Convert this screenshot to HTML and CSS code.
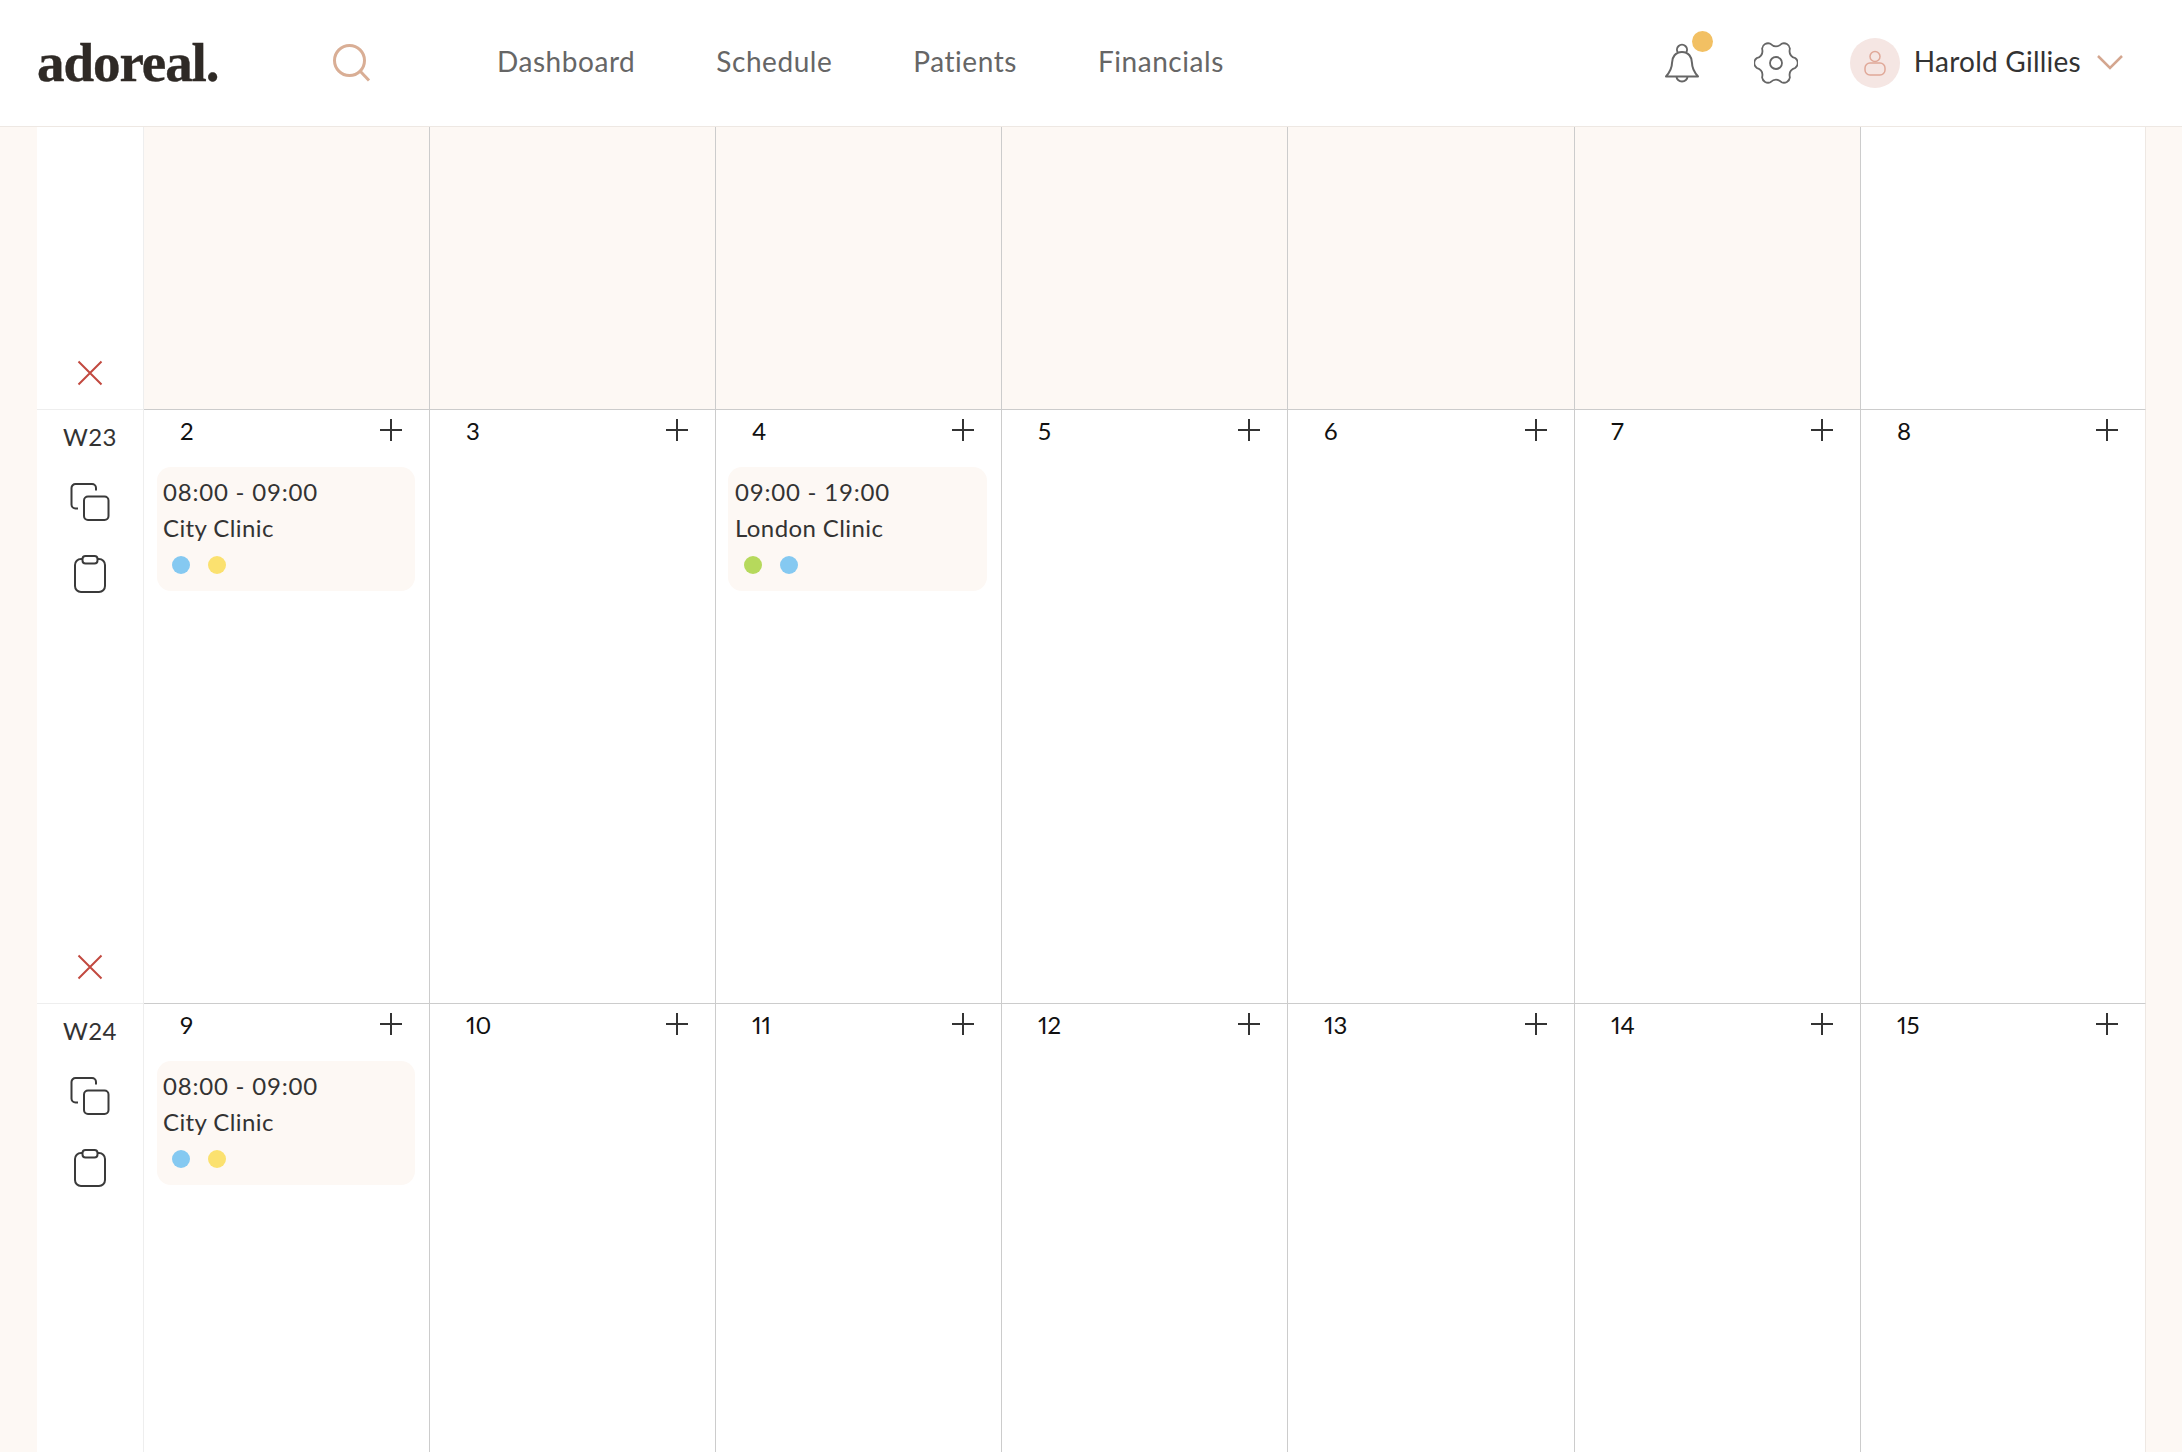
FILE: index.html
```html
<!DOCTYPE html>
<html lang="en">
<head>
<meta charset="utf-8">
<title>adoreal. Schedule</title>
<link rel="stylesheet" href="styles.css">
</head>
<body>
<svg class="defs" width="0" height="0" aria-hidden="true">
  <symbol id="i-x" viewBox="0 0 26 26"><path d="M1.500 1.500l23 23M24.500 1.500l-23 23"/></symbol>
  <symbol id="i-plus" viewBox="0 0 24 24"><path d="M12 1v22M1 12h22"/></symbol>
  <symbol id="i-copy" viewBox="0 0 40 38"><rect x="14" y="13.500" width="24.500" height="23.500" rx="4"/><path d="M8 25.500h-2.500a4 4 0 0 1-4-4V5a4 4 0 0 1 4-4H22a4 4 0 0 1 4 4v2.500"/></symbol>
  <symbol id="i-clip" viewBox="0 0 32 38"><rect x="1" y="4" width="30" height="33" rx="6"/><rect x="8.500" y="1" width="15" height="7.500" rx="3" class="fill-white"/></symbol>
</svg>

<header class="topbar">
  <div class="logo">adoreal.</div>
  <svg class="search" width="38" height="38" viewBox="0 0 38 38"><circle cx="16.500" cy="16.500" r="15"/><path d="M27.500 27.500l8.500 9"/></svg>
  <nav class="nav">
    <a>Dashboard</a>
    <a>Schedule</a>
    <a>Patients</a>
    <a>Financials</a>
  </nav>
  <div class="tools">
    <div class="bell-wrap">
      <svg class="bell" width="36" height="42" viewBox="0 0 36 42"><path d="M14 10.800a5 5 0 1 1 8 0"/><path d="M18 10C11.500 10 8 15 8 21 8 27 5 31 2 34.500H34C31 31 28 27 28 21 28 15 24.500 10 18 10Z"/><path d="M12.500 34.500a5.500 5 0 0 0 11 0"/></svg>
      <span class="badge"></span>
    </div>
    <svg class="gear" width="44" height="44" viewBox="-22 -22 44 44"><path d="M19.400-4.800A6 6 0 0 1 19.400 4.800Q12.100 7 13.900 14.400A6 6 0 0 1 5.500 19.200Q0 14-5.500 19.200A6 6 0 0 1-13.900 14.400Q-12.100 7-19.400 4.800A6 6 0 0 1-19.400-4.800Q-12.100-7-13.900-14.400A6 6 0 0 1-5.500-19.200Q0-14 5.500-19.200A6 6 0 0 1 13.900-14.400Q12.100-7 19.400-4.800Z"/><circle r="6"/></svg>
    <div class="user">
      <span class="avatar"><svg width="22" height="26" viewBox="0 0 22 26"><circle cx="11" cy="6.500" r="5"/><rect x="1" y="13" width="20" height="12" rx="5"/></svg></span>
      <span class="name">Harold Gillies</span>
      <svg class="chev" width="26" height="15" viewBox="0 0 26 15"><path d="M1 1l12 12L25 1"/></svg>
    </div>
  </div>
</header>

<main class="calendar">
  <section class="week week-top">
    <div class="side"><svg class="ic-x"><use href="#i-x"/></svg></div>
    <div class="day off"></div><div class="day off"></div><div class="day off"></div><div class="day off"></div><div class="day off"></div><div class="day off"></div><div class="day"></div>
  </section>

  <section class="week">
    <div class="side">
      <div class="wk">W23</div>
      <svg class="ic-copy"><use href="#i-copy"/></svg>
      <svg class="ic-clip"><use href="#i-clip"/></svg>
      <svg class="ic-x"><use href="#i-x"/></svg>
    </div>
    <div class="day">
      <div class="day-head"><span class="num">2</span><svg class="ic-plus"><use href="#i-plus"/></svg></div>
      <div class="shift"><div class="time">08:00 - 09:00</div><div class="place">City Clinic</div><div class="dots"><i class="dot blue"></i><i class="dot yellow"></i></div></div>
    </div>
    <div class="day"><div class="day-head"><span class="num">3</span><svg class="ic-plus"><use href="#i-plus"/></svg></div></div>
    <div class="day">
      <div class="day-head"><span class="num">4</span><svg class="ic-plus"><use href="#i-plus"/></svg></div>
      <div class="shift shift-b"><div class="time">09:00 - 19:00</div><div class="place">London Clinic</div><div class="dots"><i class="dot green"></i><i class="dot blue"></i></div></div>
    </div>
    <div class="day"><div class="day-head"><span class="num">5</span><svg class="ic-plus"><use href="#i-plus"/></svg></div></div>
    <div class="day"><div class="day-head"><span class="num">6</span><svg class="ic-plus"><use href="#i-plus"/></svg></div></div>
    <div class="day"><div class="day-head"><span class="num">7</span><svg class="ic-plus"><use href="#i-plus"/></svg></div></div>
    <div class="day"><div class="day-head"><span class="num">8</span><svg class="ic-plus"><use href="#i-plus"/></svg></div></div>
  </section>

  <section class="week week-last">
    <div class="side">
      <div class="wk">W24</div>
      <svg class="ic-copy"><use href="#i-copy"/></svg>
      <svg class="ic-clip"><use href="#i-clip"/></svg>
    </div>
    <div class="day">
      <div class="day-head"><span class="num">9</span><svg class="ic-plus"><use href="#i-plus"/></svg></div>
      <div class="shift"><div class="time">08:00 - 09:00</div><div class="place">City Clinic</div><div class="dots"><i class="dot blue"></i><i class="dot yellow"></i></div></div>
    </div>
    <div class="day"><div class="day-head"><span class="num">10</span><svg class="ic-plus"><use href="#i-plus"/></svg></div></div>
    <div class="day"><div class="day-head"><span class="num">11</span><svg class="ic-plus"><use href="#i-plus"/></svg></div></div>
    <div class="day"><div class="day-head"><span class="num">12</span><svg class="ic-plus"><use href="#i-plus"/></svg></div></div>
    <div class="day"><div class="day-head"><span class="num">13</span><svg class="ic-plus"><use href="#i-plus"/></svg></div></div>
    <div class="day"><div class="day-head"><span class="num">14</span><svg class="ic-plus"><use href="#i-plus"/></svg></div></div>
    <div class="day"><div class="day-head"><span class="num">15</span><svg class="ic-plus"><use href="#i-plus"/></svg></div></div>
  </section>
</main>
</body>
</html>
```

FILE: styles.css
```css
* { box-sizing: border-box; }
html, body { margin: 0; height: 1452px; overflow: hidden; }
body { background: #fdf8f4; font-family: "Lato", "Noto Sans", sans-serif; color: #333; font-variant-ligatures: none; }
.defs { position: absolute; }

.topbar { display: flex; align-items: center; height: 127px; padding: 0 0 1px 37px; background: #fff; border-bottom: 1px solid #eee8e3; }
.logo { width: 296px; font-family: "Liberation Serif", serif; font-weight: 700; font-size: 55px; letter-spacing: -1.05px; color: #2f2a26; -webkit-text-stroke: 0.4px #2f2a26; }
.search { fill: none; stroke: #d9ae95; stroke-width: 3; flex: none; }
.nav { display: flex; gap: 81px; margin-left: 126px; margin-top: -4px; font-size: 28px; letter-spacing: 0.55px; color: #666; }
.tools { display: flex; align-items: center; margin-left: auto; padding-right: 59px; }
.bell-wrap { position: relative; display: flex; width: 36px; height: 42px; margin-right: 54px; }
.bell { fill: none; stroke: #666; stroke-width: 2; stroke-linejoin: round; }
.badge { position: absolute; top: -11px; left: 28px; width: 21px; height: 21px; border-radius: 50%; background: #f2c063; }
.gear { fill: none; stroke: #666; stroke-width: 1.8; margin-right: 52px; }
.user { display: flex; align-items: center; }
.avatar { display: flex; align-items: center; justify-content: center; width: 50px; height: 50px; border-radius: 50%; background: #f5e6e3; margin-right: 14px; }
.avatar svg { fill: none; stroke: #e0a898; stroke-width: 1.5; }
.name { margin-top: -4px; font-size: 28px; letter-spacing: 0.25px; color: #333; margin-right: 16px; }
.chev { fill: none; stroke: #d4a68f; stroke-width: 2.5; }

.calendar { padding: 0 36px 0 37px; }
.week { display: grid; grid-template-columns: 107px 286px 286px 286px 286px 287px 286px 285px; height: 594px; }
.week-top { height: 283px; }
.week-last { height: 449px; }
.week-last > * { border-bottom: 0; }
.side { display: flex; flex-direction: column; align-items: center; background: #fff; border-right: 1px solid #eee; border-bottom: 1px solid #eee; padding-top: 15px; }
.week-top .side { padding-top: 0; justify-content: flex-end; }
.ic-x { display: block; width: 26px; height: 26px; fill: none; stroke: #c2493f; stroke-width: 2; }
.side > .ic-x { margin-top: auto; margin-bottom: 23px; }
.day { background: #fff; border-right: 1px solid #ccc; border-bottom: 1px solid #ccc; }
.day:last-child { border-right: 1px solid #eee8e3; }
.off { background: #fdf8f4; }

.wk { font-size: 24px; line-height: 24px; color: #333; letter-spacing: 0.4px; }
.ic-copy { display: block; width: 40px; height: 38px; margin-top: 34px; fill: none; stroke: #3a3a3a; stroke-width: 2; }
.ic-clip { display: block; width: 32px; height: 38px; margin-top: 34px; fill: none; stroke: #3a3a3a; stroke-width: 2; }
.fill-white { fill: #fff; }

.day-head { display: flex; justify-content: space-between; align-items: flex-start; height: 57px; padding: 8px 26px 0 36px; }
.num { font-size: 24px; line-height: 26px; color: #111; font-variant-numeric: proportional-nums; }
.ic-plus { display: block; width: 24px; height: 24px; fill: none; stroke: #333; stroke-width: 2; }

.shift { height: 124px; margin: 0 14px 0 13px; padding: 10px 6px 0; background: #fdf8f4; border-radius: 14px; font-size: 24px; color: #333; }
.shift-b { margin: 0 14px 0 12px; padding-left: 7px; }
.time { line-height: 30px; letter-spacing: 0.8px; }
.place { line-height: 30px; margin-top: 6px; letter-spacing: 0.4px; }
.dots { display: flex; gap: 18px; margin: 13px 0 0 9px; }
.dot { width: 18px; height: 18px; border-radius: 50%; }
.blue { background: #85c9f1; }
.yellow { background: #fbe16f; }
.green { background: #b6d95c; }
```
